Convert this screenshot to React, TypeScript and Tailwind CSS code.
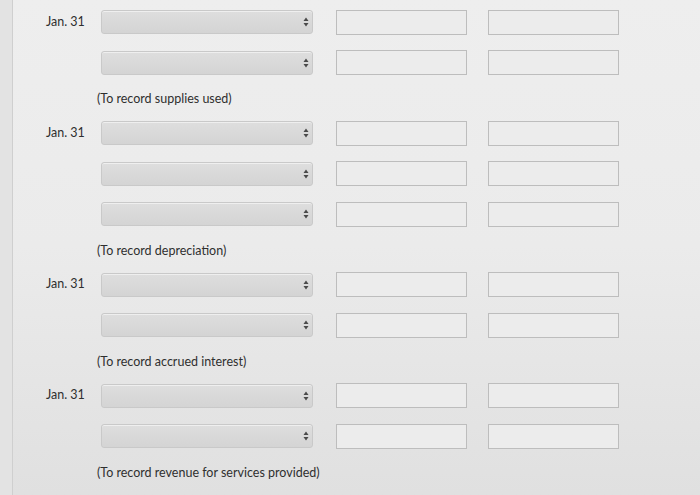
import React from 'react';

const font = { fontFamily: 'Lato, "Open Sans", Arial, sans-serif' };

const Select: React.FC = () => (
  <div className="relative w-[212px] h-6 rounded-[3px] border border-[#c9c9c9] bg-gradient-to-b from-[#dedede] to-[#d4d4d4] shadow-[inset_0_1px_0_rgba(255,255,255,0.5)]">
    <svg className="absolute right-[3px] top-1/2 -translate-y-1/2" width="6" height="10" viewBox="0 0 6 10">
      <path d="M3 0.5 L5.5 4 L0.5 4 Z" fill="#4a4a4a" />
      <path d="M3 9.5 L5.5 6 L0.5 6 Z" fill="#4a4a4a" />
    </svg>
  </div>
);

const Amount: React.FC = () => (
  <div className="w-[131px] h-[25px] border border-[#bdbdbd] bg-[#ececec]" />
);

const Row: React.FC<{ date?: string }> = ({ date }) => (
  <div className="flex items-center h-6">
    <div className="w-[55px] text-[12.5px] text-[#2f2f2f]">{date}</div>
    <Select />
    <div className="ml-[23px]">
      <Amount />
    </div>
    <div className="ml-[21px]">
      <Amount />
    </div>
  </div>
);

const Note: React.FC<{ text: string }> = ({ text }) => (
  <div className="ml-[51px] mt-[15.5px] mb-[13px] h-[18px] leading-[18px] text-[12.5px] text-[#2f2f2f]">{text}</div>
);

const groups = [
  { rows: 2, note: '(To record supplies used)' },
  { rows: 3, note: '(To record depreciation)' },
  { rows: 2, note: '(To record accrued interest)' },
  { rows: 2, note: '(To record revenue for services provided)' },
];

export default function App() {
  return (
    <div style={font} className="flex w-[700px] h-[495px] overflow-hidden bg-gradient-to-b from-[#eeeeee] via-[#ebebeb] to-[#e0e0e0]">
      <div className="w-[13px] shrink-0 bg-[#e3e3e3] border-r border-[#cfcfcf]" />
      <div className="flex flex-col pl-[33px] pt-[10px]">
        {groups.map((g, gi) => (
          <div key={gi} className="flex flex-col">
            <div className="flex flex-col gap-[16.5px]">
              {Array.from({ length: g.rows }).map((_, ri) => (
                <Row key={ri} date={ri === 0 ? 'Jan. 31' : undefined} />
              ))}
            </div>
            <Note text={g.note} />
          </div>
        ))}
      </div>
    </div>
  );
}
